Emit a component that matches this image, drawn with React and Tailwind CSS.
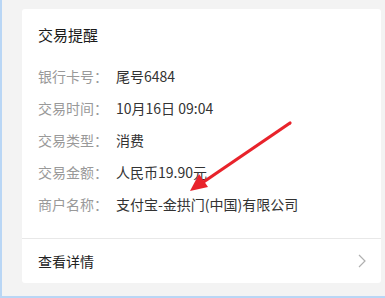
import React from "react";

const rows = [
  ["银行卡号：", "尾号6484"],
  ["交易时间：", "10月16日 09:04"],
  ["交易类型：", "消费"],
  ["交易金额：", "人民币19.90元"],
  ["商户名称：", "支付宝-金拱门(中国)有限公司"],
];

export default function App() {
  return (
    <div
      className="relative w-[385px] h-[298px] overflow-hidden bg-[#f3f3f3] border-l-2 border-[#b9d6f5]"
      style={{ fontFamily: '"Microsoft YaHei", "Noto Sans CJK SC", "Noto Sans", sans-serif' }}
    >
      <div className="ml-[20px] mt-[9px] w-[359px] h-[274px] bg-white rounded-[3px] flex flex-col">
        <div className="pl-4 pt-[15px] h-[37px] text-[15px] leading-[22px] text-[#1a1a1a]">交易提醒</div>
        <div className="mt-[14px] flex flex-col">
          {rows.map(([k, v]) => (
            <div key={k} className="h-[32px] flex items-center pl-4 text-[14px]">
              <span className="w-[78px] text-[#999999]">{k}</span>
              <span className="text-[#333333]">{v}</span>
            </div>
          ))}
        </div>
        <div className="mt-[18px] border-t border-[#e8e8e8] flex-1 flex items-center justify-between pl-4 pr-[15px]">
          <span className="text-[14px] text-[#222222]">查看详情</span>
          <svg width="8" height="14" viewBox="0 0 8 14">
            <path d="M1 1 L7 7 L1 13" fill="none" stroke="#b0b0b0" strokeWidth="1.2" />
          </svg>
        </div>
      </div>
      <div className="absolute left-0 right-0 top-[296px] h-[2px] bg-[#b9d6f5]" />
      <svg className="absolute left-0 top-0" width="385" height="298" viewBox="0 0 385 298">
        <line x1="288" y1="123" x2="200" y2="183" stroke="#e8232b" strokeWidth="3.2" strokeLinecap="round" />
        <polygon points="188,191 197,174 206,187" fill="#e8232b" />
      </svg>
    </div>
  );
}
